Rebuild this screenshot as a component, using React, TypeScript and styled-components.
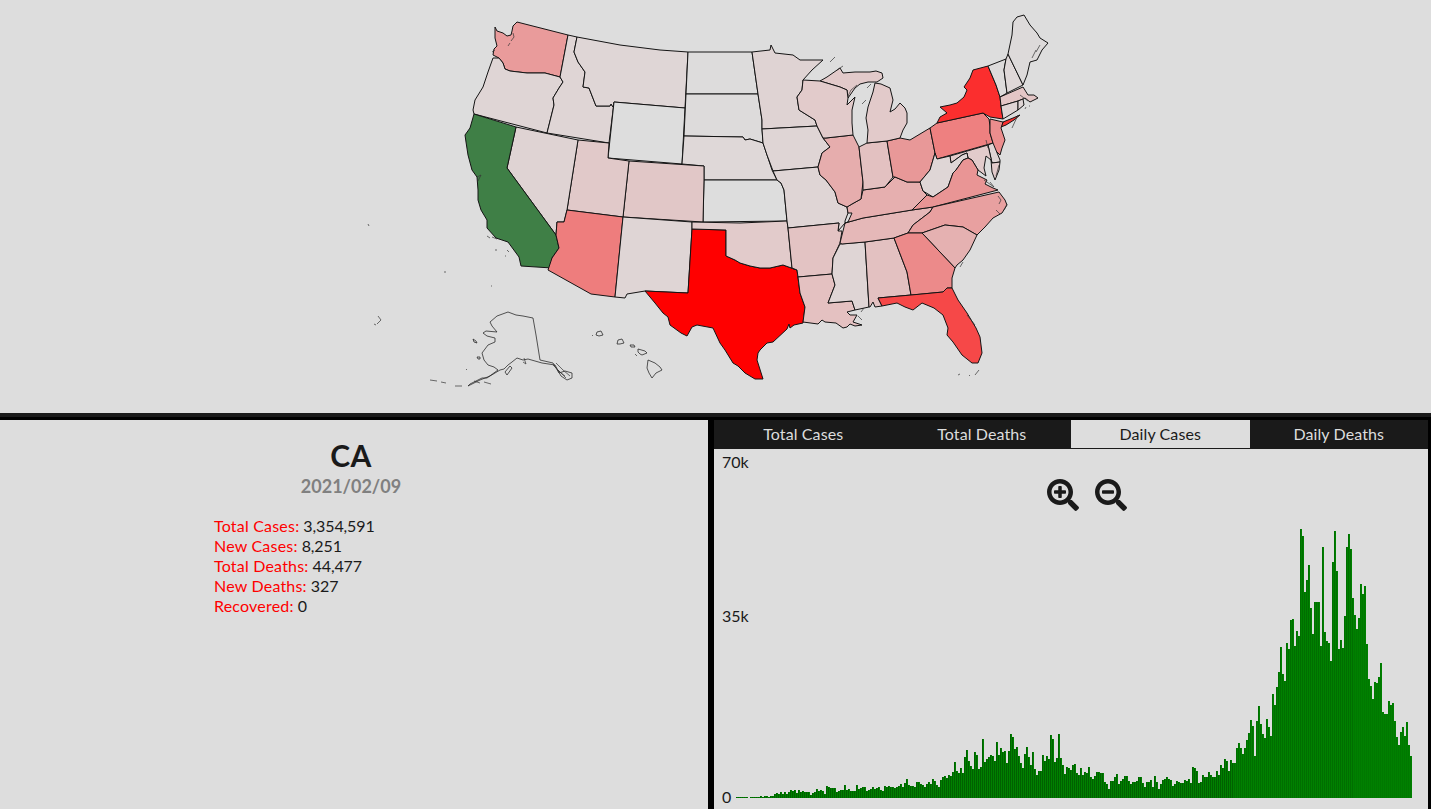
import React from "react";
import styled, { createGlobalStyle } from "styled-components";
import { FaSearchPlus, FaSearchMinus } from "react-icons/fa";

const Global = createGlobalStyle`
  html, body { margin: 0; padding: 0; background: #dddddd; overflow: hidden; }
  * { box-sizing: border-box; }
`;

const Page = styled.div`
  width: 100vw;
  height: 100vh;
  display: flex;
  flex-direction: column;
  overflow: hidden;
  font-family: "Lato", "Noto Sans", sans-serif;
  background: #dddddd;
`;

const MapPanel = styled.section`
  flex: none;
  height: 417px;
  border-bottom: 4px solid #1a1a1a;
`;

const MapSvg = styled.svg`
  display: block;
  width: 1431px;
  height: 413px;
`;

const Lower = styled.div`
  flex: 1;
  min-height: 0;
  display: flex;
  border-top: 3px solid #000;
`;

const InfoPanel = styled.section`
  flex: none;
  width: 708px;
  padding-top: 17px;
  color: #1a1a1a;
`;

const Title = styled.h1`
  margin: 0 6px 0 0;
  text-align: center;
  font-size: 30px;
  line-height: 36px;
  font-weight: 700;
  letter-spacing: 0.3px;
`;

const DateLine = styled.h2`
  margin: 2px 6px 0 0;
  text-align: center;
  font-size: 18px;
  line-height: 22px;
  font-weight: 700;
  color: #808080;
`;

const Stats = styled.ul`
  list-style: none;
  margin: 19px 0 0 214px;
  padding: 0;
  font-size: 16px;
  line-height: 20px;
  letter-spacing: -0.1px;
`;

const StatLabel = styled.span`
  color: #ff0000;
  letter-spacing: 0.2px;
`;

const ChartPanel = styled.section`
  flex: 1;
  min-width: 0;
  display: flex;
  flex-direction: column;
  border-left: 6px solid #000;
  border-right: 3px solid #000;
`;

const Tabs = styled.nav`
  flex: none;
  height: 29px;
  display: grid;
  grid-template-columns: repeat(4, 1fr);
  background: #1a1a1a;
`;

const Tab = styled.button<{ $active?: boolean }>`
  border: 0;
  padding: 0 0 2px;
  margin: 0 0 ${(p) => (p.$active ? "1px" : "0")};
  font: inherit;
  font-size: 16px;
  letter-spacing: 0.1px;
  color: ${(p) => (p.$active ? "#1a1a1a" : "#dddddd")};
  background: ${(p) => (p.$active ? "#dddddd" : "#1a1a1a")};
`;

const ChartBody = styled.div`
  position: relative;
  flex: 1;
  min-height: 0;
`;

const BarsSvg = styled.svg`
  display: block;
  width: 714px;
  height: 360px;
`;

const AxisLabel = styled.span<{ $top: number }>`
  position: absolute;
  left: 8px;
  top: ${(p) => p.$top}px;
  font-size: 16px;
  line-height: 20px;
  color: #1a1a1a;
`;

const ZoomButtons = styled.div`
  position: absolute;
  left: 333px;
  top: 30px;
  display: flex;
  gap: 16px;
`;

const ZoomButton = styled.button`
  display: block;
  width: 32px;
  height: 32px;
  padding: 0;
  border: 0;
  background: none;
  color: #1a1a1a;
  svg { display: block; }
`;

type Shape = { id: string; fill: string; pts: string };

const STATES: Shape[] = [
  { id: "WA", fill: "#e99b9b", pts: "495,27 497,31 503,33 507,36 511,35 512,31 513,26 517,22 568,35 560,77 545,73 527,73 510,71 505,69 503,63 499,58 493,55 494,49 497,46 495,38" },
  { id: "OR", fill: "#dfd5d5", pts: "493,58 499,58 503,63 505,69 510,71 527,73 545,73 560,77 563,82 559,88 553,98 554,105 547,133 474,114 473,110 475,100 483,87 488,72" },
  { id: "ID", fill: "#dfd5d5", pts: "568,35 577,37 574,52 578,62 585,72 583,87 589,88 596,106 610,106 611,104 613,107 614,102 609,143 547,133 554,105 553,98 559,88 563,82 560,77" },
  { id: "MT", fill: "#dfd6d6", pts: "577,37 620,45 660,50 688,52 685,108 614,102 613,107 611,104 610,106 596,106 589,88 583,87 585,72 578,62 574,52" },
  { id: "WY", fill: "#dddddd", pts: "614,102 685,108 682,164 608,158" },
  { id: "ND", fill: "#dddcdc", pts: "688,52 720,52 752,52 758,94 686,94" },
  { id: "SD", fill: "#dddbdb", pts: "686,94 758,94 762,120 762,129 763,143 750,139 745,140 743,137 684,136" },
  { id: "NE", fill: "#dfd8d8", pts: "684,136 743,137 745,140 750,139 763,143 767,155 772,170 777,180 704,180 704,166 682,164" },
  { id: "KS", fill: "#dddddd", pts: "704,180 777,180 781,183 784,190 787,221 703,222" },
  { id: "CO", fill: "#e1c7c7", pts: "629,161 704,166 704,180 703,222 623,217" },
  { id: "UT", fill: "#e1c9c9", pts: "578,140 609,143 608,158 629,161 623,217 567,210" },
  { id: "NV", fill: "#dfd3d3", pts: "516,127 578,140 567,210 564,222 557,222 556,235 507,168" },
  { id: "CA", fill: "#3f7f46", pts: "474,114 516,127 507,168 556,235 559,248 552,258 552,268 521,266 519,257 508,242 496,238 487,228 487,220 481,210 478,200 478,190 477,177 472,170 468,155 466,142 465,135 470,128" },
  { id: "AZ", fill: "#ee7d7d", pts: "567,210 623,217 615,297 591,294 548,270 552,258 559,248 556,235 557,222 564,222" },
  { id: "NM", fill: "#dfd5d5", pts: "623,217 692,222 692,229 688,293 645,291 627,294 625,298 615,297" },
  { id: "TX", fill: "#ff0000", pts: "692,229 726,230 726,256 735,260 740,263 750,266 760,268 770,268 783,265 797,270 800,293 805,307 803,323 794,325 790,328 789,324 787,329 773,342 767,343 760,350 758,353 757,360 763,379 755,379 745,373 738,366 733,363 725,350 720,343 713,328 697,325 692,327 687,336 681,333 670,325 668,317 663,313 655,303 645,291 688,293" },
  { id: "OK", fill: "#e2cbcb", pts: "692,222 740,223 787,221 788,228 792,268 797,270 783,265 770,268 760,268 750,266 740,263 735,260 726,256 726,230 692,229" },
  { id: "MN", fill: "#dfd3d3", pts: "752,52 770,50 771,45 775,53 793,55 800,60 808,60 823,60 812,70 803,80 802,90 797,97 799,110 815,120 817,126 762,129 762,120 758,94" },
  { id: "IA", fill: "#dfd5d5", pts: "762,129 817,126 823,138 830,147 822,153 820,160 818,167 773,171 767,155 763,143" },
  { id: "MO", fill: "#dfd5d5", pts: "773,171 818,167 820,175 826,180 835,192 838,203 847,207 848,213 845,221 845,223 838,231 839,223 788,228 787,221 784,190 781,183 777,180" },
  { id: "AR", fill: "#e3c3c3", pts: "788,228 839,223 838,231 842,231 840,243 833,258 832,274 798,277 797,270 792,268" },
  { id: "LA", fill: "#e4c1c1", pts: "798,277 832,274 835,285 828,303 852,301 855,310 847,312 850,315 857,315 853,322 862,325 855,326 850,324 847,327 843,328 836,323 825,322 822,320 818,324 803,322 805,307 800,293" },
  { id: "MS", fill: "#dfd5d5", pts: "840,244 865,242 869,307 855,310 852,301 828,303 835,285 832,274 833,258" },
  { id: "AL", fill: "#e3c1c1", pts: "865,242 894,238 907,272 911,295 878,298 882,306 875,307 873,302 870,307 869,307" },
  { id: "TN", fill: "#e5b8b8", pts: "842,244 840,243 845,223 863,218 912,210 933,207 930,212 913,225 908,233 894,238 865,242" },
  { id: "KY", fill: "#e6afaf", pts: "845,223 848,222 852,213 848,213 847,207 852,204 861,199 863,190 885,187 895,177 907,182 920,182 923,191 927,195 912,210 863,218" },
  { id: "IL", fill: "#e6adad", pts: "826,138 853,135 859,147 863,182 861,199 852,204 847,207 838,203 835,192 826,180 820,175 818,167 820,160 822,153 830,147 823,138" },
  { id: "IN", fill: "#e3c1c1", pts: "859,147 867,143 887,141 893,177 885,187 863,190 863,182" },
  { id: "OH", fill: "#e89898", pts: "887,141 900,138 910,140 930,128 935,153 930,170 920,182 907,182 895,177 893,177" },
  { id: "MI", fill: "#e2caca", pts: "867,143 868,130 866,118 868,107 873,92 875,83 881,84 890,88 893,100 890,112 895,109 900,103 905,108 907,113 907,123 903,130 900,138 887,141" },
  { id: "MIU", fill: "#e2caca", pts: "820,81 827,77 840,68 843,73 855,72 870,72 876,71 882,73 883,78 877,82 868,82 860,84 855,88 848,98 847,90 840,87" },
  { id: "WI", fill: "#e2cbcb", pts: "815,120 799,110 797,97 802,90 803,80 820,81 840,87 847,90 848,98 847,105 855,97 852,110 852,123 853,135 826,138 823,138 817,126" },
  { id: "PA", fill: "#ee8080", pts: "930,128 937,123 983,113 989,119 990,126 990,133 993,143 937,159 935,153" },
  { id: "NY", fill: "#fb2e2e", pts: "937,123 940,117 947,113 940,107 950,105 957,103 964,97 967,90 964,87 970,78 973,70 988,66 996,85 1000,97 1001,106 1003,119 990,117 983,113" },
  { id: "LI", fill: "#fb2e2e", pts: "1001,127 1003,122 1013,118 1020,115 1014,120 1006,125" },
  { id: "NJ", fill: "#ec8d8d", pts: "990,119 1003,122 1001,128 1005,140 1002,148 1000,155 997,152 990,147 993,143 990,133 990,126" },
  { id: "DE", fill: "#dfd5d5", pts: "988,145 993,143 1000,160 1000,162 992,163" },
  { id: "MD", fill: "#e2cbcb", pts: "950,156 988,145 992,163 1000,162 999,170 995,180 992,172 991,160 986,156 984,168 986,176 978,170 972,160 968,158 967,153 962,155 951,163" },
  { id: "WV", fill: "#dfd6d6", pts: "935,153 937,159 950,156 951,163 962,155 967,153 968,158 963,160 956,170 953,173 948,187 933,197 923,191 920,182 930,170" },
  { id: "VA", fill: "#e99595", pts: "912,210 927,195 933,197 948,187 953,173 956,170 963,160 968,158 972,160 978,170 977,175 987,180 985,184 993,188 998,190 933,207" },
  { id: "NC", fill: "#e8a0a0", pts: "908,233 913,225 930,212 933,207 999,192 1005,200 1007,205 1002,213 993,218 985,227 977,235 963,227 945,225 922,233" },
  { id: "SC", fill: "#e5b1b1", pts: "922,233 945,225 963,227 977,235 970,250 963,260 957,265 955,268" },
  { id: "GA", fill: "#ec8a8a", pts: "894,238 908,233 922,233 955,268 952,278 952,288 947,288 943,292 912,295 911,295 907,272" },
  { id: "FL", fill: "#f64848", pts: "878,298 911,295 943,292 947,288 952,288 958,300 967,313 976,328 980,337 982,353 978,363 972,363 962,355 953,342 947,335 948,328 943,315 934,308 922,303 913,310 905,307 897,303 882,306" },
  { id: "VT", fill: "#dddbdb", pts: "988,66 1006,59 1004,70 1007,93 1000,97 996,85" },
  { id: "NH", fill: "#dfd8d8", pts: "1008,54 1023,85 1007,93 1004,70 1006,59" },
  { id: "ME", fill: "#dddada", pts: "1008,54 1012,35 1013,22 1017,17 1024,15 1030,25 1037,33 1040,38 1048,43 1042,50 1037,60 1030,62 1027,75 1023,85" },
  { id: "MA", fill: "#e3c6c6", pts: "1000,97 1023,87 1028,95 1034,95 1038,98 1030,102 1025,98 1023,99 1018,101 1001,106" },
  { id: "CT", fill: "#dfd5d5", pts: "1001,106 1018,101 1018,110 1003,119" },
  { id: "RI", fill: "#dfd5d5", pts: "1018,101 1023,99 1024,105 1018,110" },
];

const THIN: Shape[] = [
  { id: "AK", fill: "#dddddd", pts: "508,312 516,315 523,316 533,318 536,335 540,360 553,363 559,373 565,371 572,373 572,378 567,380 561,376 555,365 542,363 528,359 523,360 517,358 512,362 508,365 504,369 500,370 490,376 480,380 472,384 468,386 470,384 482,378 487,378 498,370 494,367 488,365 484,360 482,353 488,345 495,342 495,338 487,336 483,333 486,331 497,332 492,326 490,322 497,316" },
  { id: "HI1", fill: "#dddddd", pts: "648,360 655,363 660,367 662,370 656,373 652,378 649,373 647,368" },
  { id: "HI2", fill: "#dddddd", pts: "638,349 645,351 647,353 642,355 640,354 638,352" },
  { id: "HI3", fill: "#dddddd", pts: "618,340 622,339 624,343 620,344 617,344" },
  { id: "HI4", fill: "#dddddd", pts: "597,332 601,331 603,335 599,336 596,335" },
  { id: "HI5", fill: "#dddddd", pts: "630,345 634,345 635,347 631,347" },
  { id: "AKI1", fill: "#dddddd", pts: "473,339 476,341 477,343 474,342" },
  { id: "AKI2", fill: "#dddddd", pts: "477,357 480,357 480,359 478,359" },
  { id: "AKI3", fill: "#dddddd", pts: "505,372 510,366 512,368 507,375" },
];

const DETAILS = [
  "M830 62 L835 57", "M837 70 L843 66", "M848 96 L851 90 L857 85", "M867 88 L871 84", "M862 104 L866 100",
  "M492 52 L495 50", "M511 41 L514 37 L513 33", "M508 46 L510 43", "M477 177 L481 175 L478 181",
  "M487 236 L490 238", "M492 237 L497 239", "M495 250 L497 250", "M507 250 L509 252", "M505 256 L506 256",
  "M444 272 L446 272", "M491 286 L492 286", "M513 305 L513 305",
  "M592 336 L593 335", "M635 354 L637 356",
  "M524 358 L526 364 L523 362", "M553 365 L560 372 L565 376", "M556 363 L563 370 L570 376", "M558 370 L566 378",
  "M430 380 L437 381", "M441 382 L446 383", "M455 386 L462 386", "M484 382 L491 384", "M466 369 L467 370", "M474 381 L480 383",
  "M1026 107 L1025 109", "M1030 106 L1029 106", "M1012 128 L1018 115", "M1007 204 L1004 210", "M996 210 L1000 214", "M998 196 L1001 200 L999 204",
  "M999 165 L996 176", "M984 180 L994 187 L990 182", "M963 262 L960 267", "M967 315 L975 325", "M986 140 L988 148",
  "M960 374 L958 375", "M969 376 L970 375", "M979 370 L975 375", "M858 316 L862 320", "M861 312 L864 308",
  "M368 224 L369 226", "M378 316 L381 320 L377 324", "M374 324 L376 325",
  "M1036 50 L1032 58", "M1040 45 L1036 52", "M1020 95 L1028 101",
];

const LEFT_TOPS = [291,291,291,291,291,291,293,291,291,291,291,291,288,291,288,288,291,288,288,282,279,282,276,282,276,282,276,270,273,270,279,270,276,273,276,276,276,285,279,276,267,273,270,273,282,258,261,264,264,264,276,273,270,270,255,270,267,273,273,273,255,267,264,261,261,273,270,267,261,267,264,261,270,273,258,261,258,261,261,264,261,258,252,261,249,237,255,258,258,261,246,246,252,255,261,252,246,252,237,243,255,261,240,231,228,234,225,228,216,186,213,219,204,219,171,150,183,198,207,156,165,207,201,117,186,177,171,165,168,183,126,165,144,156,153,189,153,102,111,147,141,168,189,204,162,141,171,195,156,207,225,213,213,165,183,168,177,105,117,186,174,102,174,195,222,201,204,210,195,192,219,225,204,225,216,219,201,231,237,228,216,216,219,219,246,252,267,243,243,231,222];
const RIGHT_TOPS = [820,813,807,798,798,813,822,816,816,813,801,801,819,831,816,816,810,831,798,816,837,822,810,807,801,807,810,828,822,813,816,819,819,810,813,807,819,771,774,783,819,816,795,801,801,786,795,801,801,783,795,765,774,747,753,783,750,759,759,714,699,714,732,714,690,669,630,648,738,633,588,642,672,684,627,651,678,552,585,531,486,411,492,513,399,417,330,327,408,363,378,57,78,246,210,165,294,372,276,276,276,408,111,366,393,399,453,156,63,183,417,390,414,318,111,72,117,264,315,357,324,222,252,228,402,507,528,567,516,519,501,459,606,612,612,573,585,579,633,681,705,666,651,678,636,705,738];

const HEIGHTS = [
  ...LEFT_TOPS.map((t) => (293 - t) / 3),
  ...RIGHT_TOPS.map((t) => (863 - t) / 3),
];

const TABS = ["Total Cases", "Total Deaths", "Daily Cases", "Daily Deaths"];
const STATS: [string, string][] = [
  ["Total Cases:", "3,354,591"],
  ["New Cases:", "8,251"],
  ["Total Deaths:", "44,477"],
  ["New Deaths:", "327"],
  ["Recovered:", "0"],
];

const BASE_Y = 349;
const FIRST_X = 22;

const stripe = (x: number) => (x < 519 ? "#006000" : x < 639 ? "#006e00" : "#007800");

export default function App() {
  return (
    <Page>
      <Global />
      <MapPanel>
        <MapSvg viewBox="0 0 1431 413">
          {STATES.map((s) => (
            <polygon key={s.id} points={s.pts} fill={s.fill} stroke="#141414" strokeWidth={1} strokeLinejoin="round" />
          ))}
          {THIN.map((s) => (
            <polygon key={s.id} points={s.pts} fill={s.fill} stroke="#222" strokeWidth={0.75} strokeLinejoin="round" />
          ))}
          {DETAILS.map((d, i) => (
            <path key={i} d={d} fill="none" stroke="#333" strokeWidth={0.7} />
          ))}
        </MapSvg>
      </MapPanel>
      <Lower>
        <InfoPanel>
          <Title>CA</Title>
          <DateLine>2021/02/09</DateLine>
          <Stats>
            {STATS.map(([k, v]) => (
              <li key={k}>
                <StatLabel>{k}</StatLabel> {v}
              </li>
            ))}
          </Stats>
        </InfoPanel>
        <ChartPanel>
          <Tabs>
            {TABS.map((t) => (
              <Tab key={t} $active={t === "Daily Cases"}>{t}</Tab>
            ))}
          </Tabs>
          <ChartBody>
            <BarsSvg viewBox="0 0 714 360" shapeRendering="crispEdges">
              {HEIGHTS.map((h, i) => {
                const x = FIRST_X + i * 2;
                const tall = Math.max(h, 0);
                return (
                  <g key={i}>
                    <rect x={x} y={BASE_Y - tall} width={2} height={tall} fill="#008000" />
                    <rect x={x} y={BASE_Y - tall} width={1} height={tall} fill={stripe(x)} />
                  </g>
                );
              })}
            </BarsSvg>
            <AxisLabel $top={3}>70k</AxisLabel>
            <AxisLabel $top={157}>35k</AxisLabel>
            <AxisLabel $top={338}>0</AxisLabel>
            <ZoomButtons>
              <ZoomButton><FaSearchPlus size={32} /></ZoomButton>
              <ZoomButton><FaSearchMinus size={32} /></ZoomButton>
            </ZoomButtons>
          </ChartBody>
        </ChartPanel>
      </Lower>
    </Page>
  );
}
